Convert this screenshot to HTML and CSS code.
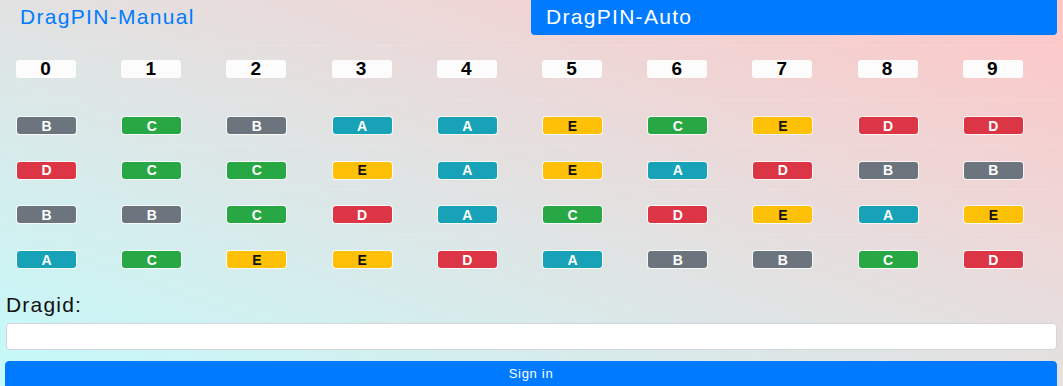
FILE: index.html
```html
<!DOCTYPE html>
<html lang="en">
<head>
<meta charset="utf-8">
<title>DragPIN</title>
<link rel="stylesheet" href="styles.css">
</head>
<body>
<div class="page">
  <nav class="tabs">
    <a class="tab" href="#">DragPIN-Manual</a>
    <a class="tab active" href="#">DragPIN-Auto</a>
  </nav>

  <div class="pin-grid">
    <div class="row head-row">
      <div class="cell"><span class="num">0</span></div>
      <div class="cell"><span class="num">1</span></div>
      <div class="cell"><span class="num">2</span></div>
      <div class="cell"><span class="num">3</span></div>
      <div class="cell"><span class="num">4</span></div>
      <div class="cell"><span class="num">5</span></div>
      <div class="cell"><span class="num">6</span></div>
      <div class="cell"><span class="num">7</span></div>
      <div class="cell"><span class="num">8</span></div>
      <div class="cell"><span class="num">9</span></div>
    </div>
    <div class="row">
      <div class="cell"><span class="badge b-b">B</span></div>
      <div class="cell"><span class="badge b-c">C</span></div>
      <div class="cell"><span class="badge b-b">B</span></div>
      <div class="cell"><span class="badge b-a">A</span></div>
      <div class="cell"><span class="badge b-a">A</span></div>
      <div class="cell"><span class="badge b-e">E</span></div>
      <div class="cell"><span class="badge b-c">C</span></div>
      <div class="cell"><span class="badge b-e">E</span></div>
      <div class="cell"><span class="badge b-d">D</span></div>
      <div class="cell"><span class="badge b-d">D</span></div>
    </div>
    <div class="row">
      <div class="cell"><span class="badge b-d">D</span></div>
      <div class="cell"><span class="badge b-c">C</span></div>
      <div class="cell"><span class="badge b-c">C</span></div>
      <div class="cell"><span class="badge b-e">E</span></div>
      <div class="cell"><span class="badge b-a">A</span></div>
      <div class="cell"><span class="badge b-e">E</span></div>
      <div class="cell"><span class="badge b-a">A</span></div>
      <div class="cell"><span class="badge b-d">D</span></div>
      <div class="cell"><span class="badge b-b">B</span></div>
      <div class="cell"><span class="badge b-b">B</span></div>
    </div>
    <div class="row">
      <div class="cell"><span class="badge b-b">B</span></div>
      <div class="cell"><span class="badge b-b">B</span></div>
      <div class="cell"><span class="badge b-c">C</span></div>
      <div class="cell"><span class="badge b-d">D</span></div>
      <div class="cell"><span class="badge b-a">A</span></div>
      <div class="cell"><span class="badge b-c">C</span></div>
      <div class="cell"><span class="badge b-d">D</span></div>
      <div class="cell"><span class="badge b-e">E</span></div>
      <div class="cell"><span class="badge b-a">A</span></div>
      <div class="cell"><span class="badge b-e">E</span></div>
    </div>
    <div class="row">
      <div class="cell"><span class="badge b-a">A</span></div>
      <div class="cell"><span class="badge b-c">C</span></div>
      <div class="cell"><span class="badge b-e">E</span></div>
      <div class="cell"><span class="badge b-e">E</span></div>
      <div class="cell"><span class="badge b-d">D</span></div>
      <div class="cell"><span class="badge b-a">A</span></div>
      <div class="cell"><span class="badge b-b">B</span></div>
      <div class="cell"><span class="badge b-b">B</span></div>
      <div class="cell"><span class="badge b-c">C</span></div>
      <div class="cell"><span class="badge b-d">D</span></div>
    </div>
  </div>

  <form class="login">
    <label class="label" for="dragid">Dragid:</label>
    <input class="input" id="dragid" type="text">
    <button class="btn" type="button">Sign in</button>
  </form>
</div>
</body>
</html>
```

FILE: styles.css
```css
* { box-sizing: border-box; }

html, body {
  margin: 0;
  padding: 0;
}

body {
  min-height: 386px;
  font-family: "Liberation Sans", Arial, sans-serif;
  color: #212529;
  background: linear-gradient(to top right, #c4fbfb 0%, #e2e2e2 50%, #ffc6c6 100%);
  overflow: hidden;
}

.page {
  padding: 0 6px 0 5px;
}

.tabs {
  display: flex;
  height: 35px;
}

.tab {
  flex: 1;
  display: flex;
  align-items: center;
  padding: 0 15px 2px 15px;
  font-size: 21px;
  letter-spacing: 1.3px;
  color: #007bff;
  text-decoration: none;
}

.tab.active {
  background: #007bff;
  color: #fff;
  border-radius: 0 0 4px 4px;
}

.pin-grid {
  margin-top: 10px;
}

.row {
  display: grid;
  grid-template-columns: repeat(10, 1fr);
  height: 44.7px;
  padding-top: 16px;
  border-top: 1px solid rgba(255, 255, 255, 0.12);
}

.head-row {
  height: 55px;
  padding-top: 14px;
}

.cell {
  padding-left: 11px;
}

.num {
  display: flex;
  align-items: center;
  justify-content: center;
  width: 60px;
  height: 18px;
  background: #fcfcfc;
  border-radius: 3px;
  font-size: 19px;
  font-weight: bold;
  letter-spacing: 1px;
  color: #000;
}

.badge {
  display: flex;
  align-items: center;
  justify-content: center;
  width: 59px;
  height: 17px;
  margin-left: 1px;
  border-radius: 3px;
  box-shadow: 0 0 0 1px rgba(255, 255, 255, 0.75);
  font-size: 14px;
  font-weight: bold;
  color: #fff;
}

.b-a { background: #17a2b8; }
.b-b { background: #6c757d; }
.b-c { background: #28a745; }
.b-d { background: #dc3545; }
.b-e { background: #ffc107; color: #111; }

.login {
  display: flex;
  flex-direction: column;
  margin-top: 14px;
}

.label {
  font-size: 21px;
  letter-spacing: 1.2px;
  line-height: 24px;
  padding-left: 1px;
  color: #111;
}

.input {
  margin: 6px 0 0 1px;
  height: 27px;
  background: #fff;
  border: 1px solid #d2d6da;
  border-radius: 4px;
  font-family: inherit;
}

.btn {
  margin-top: 11px;
  height: 30px;
  padding: 3px 0 8px;
  background: #007bff;
  border: 1px solid #007bff;
  border-radius: 4px;
  color: #fff;
  font-family: inherit;
  font-size: 13px;
  letter-spacing: 0.7px;
  line-height: 18px;
}
```
